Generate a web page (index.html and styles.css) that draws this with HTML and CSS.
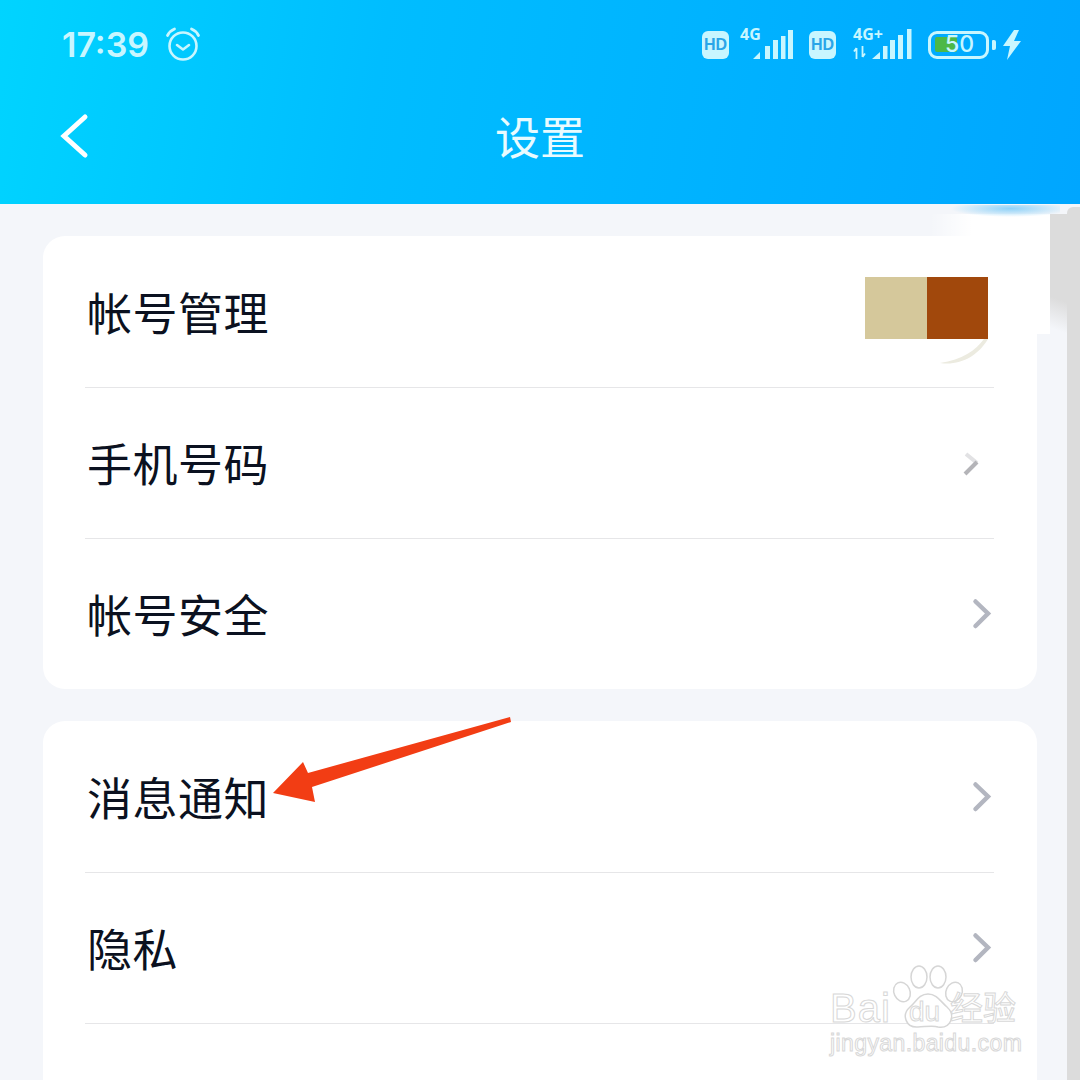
FILE: index.html
```html
<!DOCTYPE html>
<html lang="zh-CN">
<head>
  <meta charset="UTF-8" />
  <meta name="viewport" content="width=device-width, initial-scale=1.0" />
  <title>设置</title>
  <link rel="stylesheet" href="styles.css">
</head>
<body>
  <header class="top">
    <div class="status">
      <div class="status-left">
        <span class="time">17:39</span>
        <svg class="alarm" width="36" height="36" viewBox="0 0 36 36" fill="none" stroke="#c8f6ff" stroke-linecap="round">
          <circle cx="18" cy="20" r="13.5" stroke-width="2.6"/>
          <path d="M12 19l6 4.500 6-4.500" stroke-width="2.6" stroke-linejoin="round"/>
          <path d="M2.500 9.500C4 6.500 6.500 4.200 9.500 3M33.500 9.500C32 6.500 29.500 4.200 26.500 3" stroke-width="2.8"/>
        </svg>
      </div>
      <div class="status-right">
        <span class="hd">HD</span>
        <svg class="net net-a" width="54" height="40" viewBox="0 -6 54 40" fill="#c8f6ff">
          <text x="0" y="14" class="net-text">4G</text>
          <path d="M13 33l7-7v7zM25 33V20h5v13zM33 33V14h5v19zM41 33V10h4.500v23zM48 33V4h5v29z"/>
        </svg>
        <span class="hd">HD</span>
        <svg class="net net-b" width="60" height="40" viewBox="0 -6 60 40" fill="#c8f6ff">
          <text x="0" y="14" class="net-text">4G+</text>
          <path d="M3.500 33v-11M3.500 22l-2.500 3.500M9.500 20v11M9.500 31l2.500-3.500" fill="none" stroke="#c8f6ff" stroke-width="1.800"/>
          <path d="M19 33l8-7v7zM30 33V20h4.500v13zM37 33V14h5v19zM45 33V9h5v24zM54 33V3h4.500v30z"/>
        </svg>
        <div class="battery">
          <div class="battery-body">
            <div class="battery-fill"></div>
            <span class="battery-num">50</span>
          </div>
          <div class="battery-nub"></div>
        </div>
        <svg class="bolt" width="18" height="30" viewBox="0 0 18 30" fill="#c8f6ff">
          <path d="M11 0L0 16h7L4 30 18 11h-7l5-11z"/>
        </svg>
      </div>
    </div>
    <div class="navbar">
      <svg class="back" width="34" height="52" viewBox="0 0 34 52" fill="none" stroke="#fff" stroke-width="5" stroke-linecap="round">
        <path d="M27 7L6 26l21 19"/>
      </svg>
      <h1 class="title">设置</h1>
    </div>
  </header>

  <!-- retouched corner, sits behind the first card -->
  <div class="patch"></div>
  <div class="smudge"></div>
  <div class="scroll-shade"></div>
  <div class="scrollbar"></div>

  <main class="content">
    <section class="card">
      <div class="row">
        <span class="label">帐号管理</span>
        <div class="avatar">
          <i class="avatar-a"></i><i class="avatar-b"></i>
          <svg class="avatar-rest" width="52" height="26" viewBox="0 0 52 26" fill="#ecebe0">
            <path d="M48 0C40 11 26 21 4 24 24 27 42 17 52 0z"/>
          </svg>
        </div>
      </div>
      <div class="row">
        <span class="label">手机号码</span>
        <svg class="chev chev-faint" width="20" height="24" viewBox="0 0 20 24" fill="none" stroke-width="4">
          <path d="M5 2l11 9" stroke="#e2e2e4"/>
          <path d="M16 10L4 22" stroke="#b4b4b8"/>
        </svg>
      </div>
      <div class="row">
        <span class="label">帐号安全</span>
        <svg class="chev" width="20" height="32" viewBox="0 0 20 32" fill="none" stroke="#b3b6c0" stroke-width="4.500" stroke-linecap="round"><path d="M3.500 3.500L16 15.500 3.500 28"/></svg>
      </div>
    </section>
    <section class="card">
      <div class="row">
        <span class="label">消息通知</span>
        <svg class="chev" width="20" height="32" viewBox="0 0 20 32" fill="none" stroke="#b3b6c0" stroke-width="4.500" stroke-linecap="round"><path d="M3.500 3.500L16 15.500 3.500 28"/></svg>
      </div>
      <div class="row">
        <span class="label">隐私</span>
        <svg class="chev" width="20" height="32" viewBox="0 0 20 32" fill="none" stroke="#b3b6c0" stroke-width="4.500" stroke-linecap="round"><path d="M3.500 3.500L16 15.500 3.500 28"/></svg>
      </div>
      <div class="row"></div>
    </section>
  </main>

  <svg class="arrow" width="250" height="100" viewBox="0 0 250 100" fill="#f23d14">
    <path d="M3 76L33 45 38 56 240 0 241 5 42 70 45 85z"/>
  </svg>
  <div class="mark">
    <svg class="paw" width="76" height="70" viewBox="0 0 76 70" fill="#fff" stroke="#d6d6d6" stroke-width="1.500">
      <ellipse cx="12" cy="28" rx="8" ry="10" transform="rotate(-25 12 28)"/>
      <ellipse cx="29" cy="13" rx="8" ry="11"/>
      <ellipse cx="48" cy="13" rx="8" ry="11"/>
      <ellipse cx="64" cy="28" rx="8" ry="10" transform="rotate(25 64 28)"/>
      <path d="M38 30c-9 0-12 8-18 13-9 8-4 21 8 20 6 0 15-2 20 0 13 2 18-12 9-20-6-5-10-13-19-13z"/>
    </svg>
    <div class="mark-top"><span class="mark-bai">Bai</span><span class="mark-du">du</span><span class="mark-cn">经验</span></div>
    <div class="mark-url">jingyan.baidu.com</div>
  </div>
</body>
</html>
```

FILE: styles.css
```css
* {
  box-sizing: border-box;
}
html, body {
  margin: 0;
  height: 1080px;
  overflow: hidden;
}
body {
  position: relative;
  background-color: #f4f6fa;
  font-family: "Noto Sans CJK SC", "Noto Sans", sans-serif;
}
.top {
  height: 204px;
  background: linear-gradient(100deg, #00d4ff 0%, #00bdff 35%, #00a6ff 100%);
}
.status {
  height: 88px;
  padding: 26px 59px 0 62px;
  display: flex;
  justify-content: space-between;
  align-items: flex-start;
}
.status-left {
  display: flex;
  align-items: center;
  gap: 16px;
}
.time {
  font-family: Inter, sans-serif;
  font-size: 34px;
  font-weight: 600;
  line-height: 38px;
  color: #c8f6ff;
}
.alarm {
  margin-top: -2px;
}
.status-right {
  display: flex;
  align-items: flex-start;
}
.hd {
  width: 27px;
  height: 28px;
  margin-top: 5px;
  border-radius: 6px;
  background: #c8f6ff;
  color: #2aa5e8;
  font: 700 16px/28px "Liberation Sans", sans-serif;
  text-align: center;
}
.net {
  margin-top: -6px;
}
.net-a {
  margin-left: 11px;
  margin-right: 15px;
}
.net-b {
  margin-left: 17px;
  margin-right: 15px;
}
.net-text {
  font: 700 16px "Open Sans", sans-serif;
}
.battery {
  display: flex;
  align-items: center;
  gap: 3px;
  margin-top: 5px;
}
.battery-body {
  position: relative;
  width: 61px;
  height: 28px;
  border: 3.5px solid #c8f6ff;
  border-radius: 9px;
}
.battery-fill {
  width: 22px;
  height: 15px;
  margin: 3px 0 0 3.500px;
  background: #4cb848;
  border-radius: 2px;
}
.battery-num {
  position: absolute;
  left: 14px;
  top: -4px;
  font: 500 23px/28px Inter, sans-serif;
  color: #c8f6ff;
}
.battery-nub {
  width: 4px;
  height: 10px;
  border-radius: 1px 2px 2px 1px;
  background: #c8f6ff;
}
.bolt {
  margin: 4px 0 0 7px;
}
.navbar {
  position: relative;
  height: 100px;
  margin-top: -2px;
  display: flex;
  align-items: center;
  justify-content: center;
}
.back {
  position: absolute;
  left: 58px;
  top: 24px;
}
.title {
  margin: 0;
  font-size: 45px;
  font-weight: 400;
  line-height: 100px;
  color: #e8fbff;
}
.content {
  position: relative;
  height: 876px;
  overflow: hidden;
  padding: 32px 43px 0;
  display: flex;
  flex-direction: column;
  gap: 32px;
}
.card {
  flex: none;
  background: #fff;
  border-radius: 22px;
  padding: 0 43px 0 42px;
}
.row {
  height: 151px;
  display: flex;
  align-items: center;
  justify-content: space-between;
  padding: 0 2px 0 3px;
  border-top: 1px solid #e6e6e8;
}
.card .row:first-child {
  border-top: 0;
}
.label {
  margin-left: -1px;
  font-size: 45px;
  letter-spacing: 0.5px;
  line-height: 60px;
  color: #0b1120;
}
.avatar {
  position: relative;
  display: flex;
  margin: 0 4px 8px 0;
}
.avatar i {
  display: block;
  height: 62px;
}
.avatar-a {
  width: 62px;
  background: #d5c89b;
}
.avatar-b {
  width: 61px;
  background: #a1480c;
}
.avatar-rest {
  position: absolute;
  right: 0;
  top: 62px;
}
.chev-faint {
  margin-right: 11px;
  margin-top: 2px;
}
.patch {
  position: absolute;
  left: 930px;
  top: 214px;
  width: 120px;
  height: 120px;
  background: linear-gradient(90deg, rgba(255, 255, 255, 0), #fff 35%);
}
.smudge {
  position: absolute;
  left: 950px;
  top: 205px;
  width: 110px;
  height: 12px;
  background: radial-gradient(ellipse at 55% 30%, #8fd2f8, rgba(244, 246, 250, 0) 70%);
}
.scroll-shade {
  position: absolute;
  left: 1050px;
  top: 214px;
  width: 17px;
  height: 120px;
  background: linear-gradient(200deg, #dcdcdc 70%, rgba(220, 220, 220, 0) 95%);
}
.scrollbar {
  position: absolute;
  left: 1067px;
  top: 207px;
  width: 13px;
  height: 873px;
  border-top-left-radius: 6px;
  background: #dcdcdc;
}
.arrow {
  position: absolute;
  left: 270px;
  top: 717px;
}
.mark {
  position: absolute;
  left: 830px;
  top: 964px;
  width: 192px;
  height: 92px;
  color: transparent;
  -webkit-text-stroke: 1px #d8d8d8;
  font-family: "Liberation Sans", sans-serif;
}
.paw {
  position: absolute;
  left: 60px;
  top: 0;
}
.mark-top {
  position: absolute;
  left: 0;
  top: 22px;
  display: flex;
  align-items: center;
  font-size: 40px;
  line-height: 44px;
}
.mark-bai {
  width: 62px;
  letter-spacing: 1px;
}
.mark-du {
  position: relative;
  margin-left: 17px;
  width: 41px;
  top: 4px;
  font-size: 28px;
}
.mark-cn {
  position: relative;
  top: -2px;
  font: 400 33px/44px "Noto Sans CJK SC", sans-serif;
}
.mark-url {
  position: absolute;
  left: 0;
  top: 66px;
  font-size: 23px;
  line-height: 26px;
  letter-spacing: 0.4px;
}
```
